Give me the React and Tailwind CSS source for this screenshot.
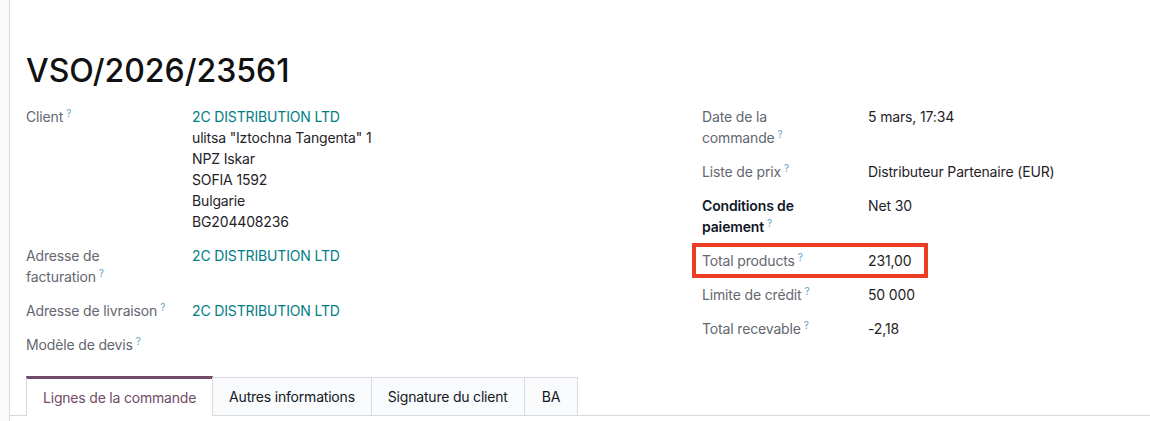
import React from "react";

const Q = () => (
  <sup className="ml-[3px] text-[10px] font-normal text-[#5f9fcc]">?</sup>
);

const Label = ({ children, bold }) => (
  <div
    className={
      "w-[166px] shrink-0 whitespace-nowrap " +
      (bold ? "font-semibold text-[#111827]" : "text-[#636770]")
    }
  >
    {children}
  </div>
);

const Row = ({ label, bold, children, extra }) => (
  <div className="relative flex">
    {extra}
    <Label bold={bold}>{label}</Label>
    <div className="text-[#1f2328]">{children}</div>
  </div>
);

const Link = ({ children }) => (
  <span className="text-[#017e84]">{children}</span>
);

export default function App() {
  return (
    <div
      className="flex h-[421px] w-[1150px] overflow-hidden bg-white text-[14px] leading-[21px] tracking-[-0.15px]"
      style={{ fontFamily: "Inter, 'Noto Sans', sans-serif" }}
    >
      <div className="w-[10px] shrink-0 border-r border-[#d8dadd] bg-[#f9fafb]" />
      <div className="flex min-w-0 flex-1 flex-col">
        <div className="px-4 pt-[52px]">
          <h1 className="text-[32px] font-medium leading-[38px] tracking-normal text-[#111111]">
            VSO/2026/23561
          </h1>
          <div className="mt-[16px] flex">
            <div className="flex w-[676px] shrink-0 flex-col gap-[13px]">
              <Row
                label={
                  <>
                    Client
                    <Q />
                  </>
                }
              >
                <Link>2C DISTRIBUTION LTD</Link>
                <div>ulitsa "Iztochna Tangenta" 1</div>
                <div>NPZ Iskar</div>
                <div>SOFIA 1592</div>
                <div>Bulgarie</div>
                <div>BG204408236</div>
              </Row>
              <Row
                label={
                  <>
                    Adresse de
                    <br />
                    facturation
                    <Q />
                  </>
                }
              >
                <Link>2C DISTRIBUTION LTD</Link>
              </Row>
              <Row
                label={
                  <>
                    Adresse de livraison
                    <Q />
                  </>
                }
              >
                <Link>2C DISTRIBUTION LTD</Link>
              </Row>
              <Row
                label={
                  <>
                    Modèle de devis
                    <Q />
                  </>
                }
              />
            </div>
            <div className="flex flex-1 flex-col gap-[13px]">
              <Row
                label={
                  <>
                    Date de la
                    <br />
                    commande
                    <Q />
                  </>
                }
              >
                5 mars, 17:34
              </Row>
              <Row
                label={
                  <>
                    Liste de prix
                    <Q />
                  </>
                }
              >
                Distributeur Partenaire (EUR)
              </Row>
              <Row
                bold
                label={
                  <>
                    Conditions de
                    <br />
                    paiement
                    <Q />
                  </>
                }
              >
                Net 30
              </Row>
              <Row
                label={
                  <>
                    Total products
                    <Q />
                  </>
                }
                extra={
                  <div className="pointer-events-none absolute -left-[10px] -top-[7px] h-[35px] w-[236px] border-4 border-[#ec3e24]" />
                }
              >
                231,00
              </Row>
              <Row
                label={
                  <>
                    Limite de crédit
                    <Q />
                  </>
                }
              >
                50 000
              </Row>
              <Row
                label={
                  <>
                    Total recevable
                    <Q />
                  </>
                }
              >
                -2,18
              </Row>
            </div>
          </div>
        </div>
        <div className="mt-[21px] flex items-end border-b border-[#d8dadd] pl-4 tracking-[-0.2px]">
          <div className="-mb-px flex h-[40px] items-center border-x border-t-[3px] border-[#d8dadd] border-t-[#714b67] bg-white px-4 text-[#714b67]">
            Lignes de la commande
          </div>
          <div className="-ml-px flex h-[38px] items-center border border-b-0 border-[#d8dadd] bg-[#f9fafb] px-4 text-[#111827]">
            Autres informations
          </div>
          <div className="-ml-px flex h-[38px] items-center border border-b-0 border-[#d8dadd] bg-[#f9fafb] px-4 text-[#111827]">
            Signature du client
          </div>
          <div className="-ml-px flex h-[38px] items-center border border-b-0 border-[#d8dadd] bg-[#f9fafb] px-[17px] text-[#111827]">
            BA
          </div>
        </div>
      </div>
    </div>
  );
}
